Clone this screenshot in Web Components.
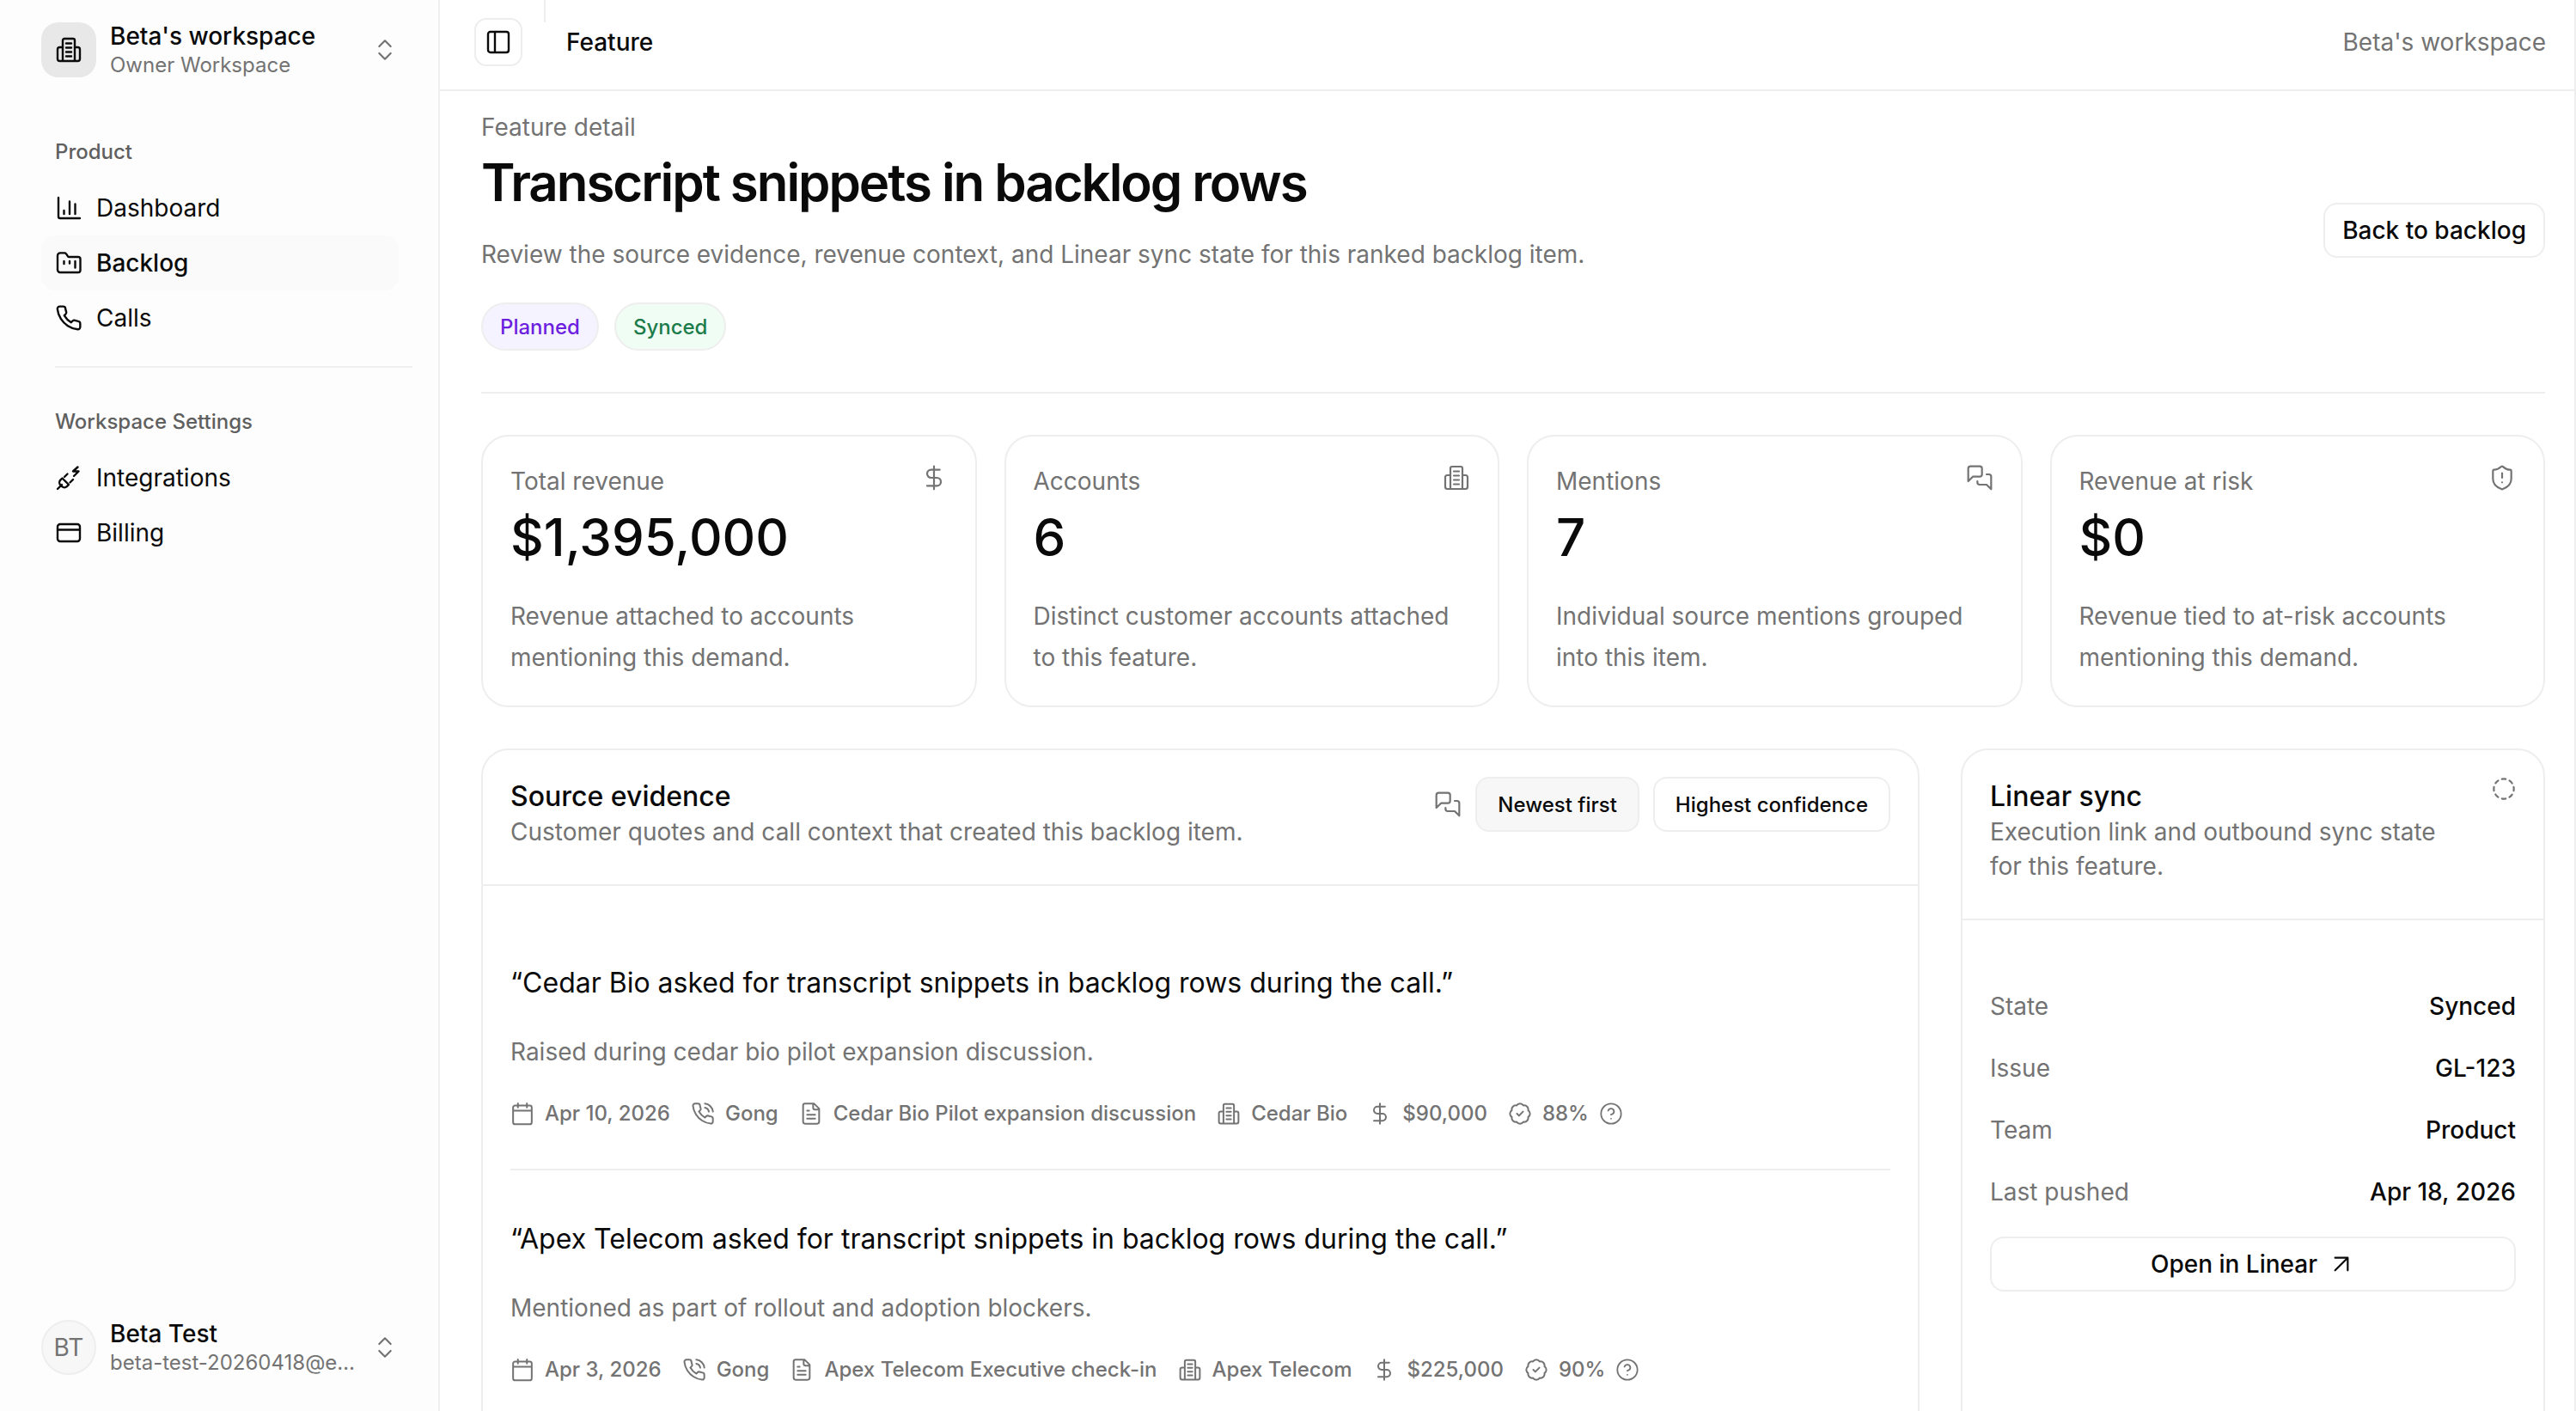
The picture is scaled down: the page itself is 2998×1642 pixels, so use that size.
<!DOCTYPE html>
<html lang="en">
<head>
<meta charset="utf-8">
<title>Feature</title>
<style>
	html, body { margin: 0; height: 100%; background: #fff; }
	body { font-family: Inter, "Noto Sans", sans-serif; color: #0a0a0a; overflow: hidden; }
</style>
</head>
<body>
<x-app>
	<x-sidebar slot="side">
		<x-switcher slot="top" name="Beta's workspace" sub="Owner Workspace" logo></x-switcher>
		<x-nav-group label="Product">
			<x-nav-item icon="chart">Dashboard</x-nav-item>
			<x-nav-item icon="folder" active>Backlog</x-nav-item>
			<x-nav-item icon="phone">Calls</x-nav-item>
		</x-nav-group>
		<x-nav-group label="Workspace Settings" divided>
			<x-nav-item icon="plug">Integrations</x-nav-item>
			<x-nav-item icon="card">Billing</x-nav-item>
		</x-nav-group>
		<x-switcher slot="bottom" name="Beta Test" sub="beta-test-20260418@e…"></x-switcher>
	</x-sidebar>
	<x-topbar slot="head" title="Feature" workspace="Beta's workspace"></x-topbar>
	<x-page-head kicker="Feature detail" title="Transcript snippets in backlog rows" sub="Review the source evidence, revenue context, and Linear sync state for this ranked backlog item.">
		<x-pill slot="pills" bg="#f5f3ff" fg="#6d1fe0">Planned</x-pill>
		<x-pill slot="pills" bg="#f0fdf4" fg="#1c7c4a">Synced</x-pill>
		<x-btn slot="action">Back to backlog</x-btn>
	</x-page-head>
	<x-stats>
		<x-stat label="Total revenue" value="$1,395,000" icon="dollar">Revenue attached to accounts mentioning this demand.</x-stat>
		<x-stat label="Accounts" value="6" icon="building">Distinct customer accounts attached to this feature.</x-stat>
		<x-stat label="Mentions" value="7" icon="messages">Individual source mentions grouped into this item.</x-stat>
		<x-stat label="Revenue at risk" value="$0" icon="shield">Revenue tied to at-risk accounts mentioning this demand.</x-stat>
	</x-stats>
	<x-columns>
		<x-panel title="Source evidence" sub="Customer quotes and call context that created this backlog item.">
			<x-icon slot="tools" name="messages" size="32" style="color:#737373"></x-icon>
			<x-btn slot="tools" small active>Newest first</x-btn>
			<x-btn slot="tools" small>Highest confidence</x-btn>
			<x-evidence quote="“Cedar Bio asked for transcript snippets in backlog rows during the call.”" note="Raised during cedar bio pilot expansion discussion." divided>
				<x-meta icon="calendar">Apr 10, 2026</x-meta>
				<x-meta icon="phonecall">Gong</x-meta>
				<x-meta icon="file">Cedar Bio Pilot expansion discussion</x-meta>
				<x-meta icon="building">Cedar Bio</x-meta>
				<x-meta icon="dollar">$90,000</x-meta>
				<x-meta icon="badge" help>88%</x-meta>
			</x-evidence>
			<x-evidence quote="“Apex Telecom asked for transcript snippets in backlog rows during the call.”" note="Mentioned as part of rollout and adoption blockers.">
				<x-meta icon="calendar">Apr 3, 2026</x-meta>
				<x-meta icon="phonecall">Gong</x-meta>
				<x-meta icon="file">Apex Telecom Executive check-in</x-meta>
				<x-meta icon="building">Apex Telecom</x-meta>
				<x-meta icon="dollar">$225,000</x-meta>
				<x-meta icon="badge" help>90%</x-meta>
			</x-evidence>
		</x-panel>
		<x-panel title="Linear sync" sub="Execution link and outbound sync state for this feature." narrow>
			<x-icon slot="tools" name="dashed" size="28" style="color:#737373"></x-icon>
			<x-sync-row label="State">Synced</x-sync-row>
			<x-sync-row label="Issue">GL-123</x-sync-row>
			<x-sync-row label="Team">Product</x-sync-row>
			<x-sync-row label="Last pushed">Apr 18, 2026</x-sync-row>
			<x-btn wide>Open in Linear <x-icon name="arrow" size="32"></x-icon></x-btn>
		</x-panel>
	</x-columns>
</x-app>

<script>
const PHONE = "M22 16.92v3a2 2 0 0 1-2.18 2 19.79 19.79 0 0 1-8.63-3.07 19.5 19.5 0 0 1-6-6 19.79 19.79 0 0 1-3.07-8.67A2 2 0 0 1 4.11 2h3a2 2 0 0 1 2 1.72 12.84 12.84 0 0 0 .7 2.81 2 2 0 0 1-.45 2.11L8.09 9.91a16 16 0 0 0 6 6l1.27-1.27a2 2 0 0 1 2.11-.45 12.84 12.84 0 0 0 2.81.7A2 2 0 0 1 22 16.92z"
const ICONS = {
	chart: [32, "M4 4v22a2 2 0 0 0 2 2h23M10.5 19v4M17 8.5V23M23.5 11.5V23"],
	folder: [32, "M6 27h21a2.5 2.5 0 0 0 2.5-2.5v-13A2.5 2.5 0 0 0 27 9H16.5a2 2 0 0 1-1.6-.8L13 5.4A2.5 2.5 0 0 0 11 4.4H6a3 3 0 0 0-3 3V24a3 3 0 0 0 3 3zM10.5 14v3M17 14v2.5M23.5 14v7.5"],
	phone: [24, PHONE],
	plug: [32, "M3 29l5-5M8.5 16.5l7.5 7.5-2.2 2.2a4 4 0 0 1-5.6 0l-1.9-1.9a4 4 0 0 1 0-5.6zM11 15l3.5-3.5M17.5 21.5l3.5-3.5M26.5 3.5l-5.5 5h6.5L22 14"],
	card: [32, "M6 6h20a3 3 0 0 1 3 3v14a3 3 0 0 1-3 3H6a3 3 0 0 1-3-3V9a3 3 0 0 1 3-3zM3 12.5h26"],
	building: [32, "M11 3h10a2 2 0 0 1 2 2v24H9V5a2 2 0 0 1 2-2zM9 13H5.5A2.500 2.500 0 0 0 3 15.500v11A2.500 2.500 0 0 0 5.500 29h21a2.500 2.500 0 0 0 2.500-2.500v-11a2.500 2.500 0 0 0-2.500-2.500H23M13 8.500h6M13 13.500h6M13 18.500h6M13 23.500h6"],
	updown: [24, "m7 15 5 5 5-5M7 9l5-5 5 5"],
	panel: [24, "M5 3h14a2 2 0 0 1 2 2v14a2 2 0 0 1-2 2H5a2 2 0 0 1-2-2V5a2 2 0 0 1 2-2zM9 3v18"],
	dollar: [24, "M12 2v20M17 5H9.500a3.500 3.500 0 0 0 0 7h5a3.500 3.500 0 0 1 0 7H6"],
	messages: [24, "M14 9a2 2 0 0 1-2 2H6l-4 4V4a2 2 0 0 1 2-2h8a2 2 0 0 1 2 2zM18 9h2a2 2 0 0 1 2 2v11l-4-4h-6a2 2 0 0 1-2-2v-1"],
	shield: [24, "M20 13c0 5-3.500 7.500-7.660 8.950a1 1 0 0 1-.67-.01C7.500 20.500 4 18 4 13V6a1 1 0 0 1 1-1c2 0 4.500-1.200 6.240-2.720a1.170 1.170 0 0 1 1.520 0C14.510 3.810 17 5 19 5a1 1 0 0 1 1 1zM12 8v4M12 16h.01"],
	calendar: [24, "M4.700 3.800h14.600a2 2 0 0 1 2 2v14.700a2 2 0 0 1-2 2H4.700a2 2 0 0 1-2-2V5.800a2 2 0 0 1 2-2zM7.500 1.800v4M16.500 1.800v4M2.700 9h18.600"],
	phonecall: [24, PHONE + "M14.050 2a9 9 0 0 1 8 7.940M14.050 6A5 5 0 0 1 18 10"],
	file: [24, "M15 2H6a2 2 0 0 0-2 2v16a2 2 0 0 0 2 2h12a2 2 0 0 0 2-2V7zM14 2v4a2 2 0 0 0 2 2h4M10 9H8M16 13H8M16 17H8"],
	badge: [24, "M3.850 8.620a4 4 0 0 1 4.780-4.770 4 4 0 0 1 6.740 0 4 4 0 0 1 4.780 4.780 4 4 0 0 1 0 6.740 4 4 0 0 1-4.770 4.780 4 4 0 0 1-6.750 0 4 4 0 0 1-4.780-4.770 4 4 0 0 1 0-6.760ZM9 12l2 2 4-4"],
	help: [24, "M12 2a10 10 0 1 1 0 20 10 10 0 0 1 0-20zM9.090 9a3 3 0 0 1 5.830 1c0 2-3 3-3 3M12 17h.01"],
	dashed: [24, "M10.100 2.182a10 10 0 0 1 3.800 0M13.900 21.818a10 10 0 0 1-3.800 0M17.609 3.721a10 10 0 0 1 2.690 2.700M2.182 13.900a10 10 0 0 1 0-3.800M20.279 17.609a10 10 0 0 1-2.700 2.690M21.818 10.100a10 10 0 0 1 0 3.800M3.721 6.391a10 10 0 0 1 2.700-2.690M6.391 20.279a10 10 0 0 1-2.690-2.700"],
	arrow: [24, "M6.500 6.500h11v11M6.500 17.500l11-11"],
}

// small base so every element is just a template + optional attributes
class Base extends HTMLElement {
	constructor() {
		super()
		this.attachShadow({mode: "open"})
	}
	connectedCallback() {
		this.shadowRoot.innerHTML = this.render()
	}
	attr(name) { return this.getAttribute(name) || "" }
}

class XIcon extends Base {
	render() {
		let [box, d] = ICONS[this.attr("name")]
		let size = this.attr("size") || 28
		let weight = this.attr("weight") || 2.2
		return `<style>
:host { display: block; flex: none; width: ${size}px; height: ${size}px; }
svg { display: block; }
path { vector-effect: non-scaling-stroke; }
</style>
<svg width="${size}" height="${size}" viewBox="0 0 ${box} ${box}" fill="none" stroke="currentColor" stroke-width="${weight}" stroke-linecap="round" stroke-linejoin="round"><path d="${d}"/></svg>`
	}
}
customElements.define("x-icon", XIcon)

class XApp extends Base {
	render() { return `<style>
:host { display: grid; grid-template-columns: 512px minmax(0, 1fr); height: 100vh; overflow: hidden; }
main { border-right: 2px solid #eeeeee; overflow: hidden; display: flex; flex-direction: column; }
.body { padding: 22px 34px 0 48px; display: flex; flex-direction: column; gap: 48px; }
</style>
<slot name="side"></slot>
<main>
	<slot name="head"></slot>
	<div class="body"><slot></slot></div>
</main>` }
}
customElements.define("x-app", XApp)

class XSidebar extends Base {
	render() { return `<style>
:host { display: flex; flex-direction: column; background: #fdfdfd; height: 100vh; box-sizing: border-box; padding: 26px 46px 42px 48px; border-right: 2px solid #f0f0f0; }
.groups { flex: 1; display: flex; flex-direction: column; padding-top: 67px; margin-right: -16px; }
</style>
<slot name="top"></slot>
<div class="groups"><slot></slot></div>
<slot name="bottom"></slot>` }
}
customElements.define("x-sidebar", XSidebar)

class XSwitcher extends Base {
	render() {
		let badge = this.hasAttribute("logo")
			? `<div class="logo"><x-icon name="building" size="32" weight="2.4"></x-icon></div>`
			: `<div class="avatar">BT</div>`
		return `<style>
:host { display: flex; align-items: center; gap: 16px; height: 64px; width: 416px; }
.logo, .avatar { width: 64px; height: 64px; flex: none; display: flex; align-items: center; justify-content: center; box-sizing: border-box; }
.logo { background: #e8e8e8; border-radius: 20px; }
.avatar { border-radius: 50%; background: #f7f7f7; border: 2px solid #eeeeee; color: #737373; font-size: 28px; }
.text { flex: 1; min-width: 0; display: flex; flex-direction: column; }
.name { font-size: 28px; line-height: 36px; font-weight: 500; }
.sub { font-size: 24px; line-height: 32px; color: #737373; white-space: nowrap; }
x-icon { color: #737373; }
.logo x-icon { color: #0a0a0a; }
</style>
${badge}
<div class="text"><div class="name">${this.attr("name")}</div><div class="sub">${this.attr("sub")}</div></div>
<x-icon name="updown" size="32"></x-icon>`
	}
}
customElements.define("x-switcher", XSwitcher)

class XNavGroup extends Base {
	render() {
		let divided = this.hasAttribute("divided")
		return `<style>
:host { display: block; ${divided ? "margin-top: 24px; border-top: 2px solid #f0f0f0; padding-top: 43px; margin-left: 16px;" : ""} }
.label { font-size: 24px; line-height: 40px; font-weight: 500; color: #5f5f5f; margin: 0 0 13px ${divided ? 0 : 16}px; }
.items { ${divided ? "margin-left: -16px;" : ""} width: 416px; display: flex; flex-direction: column; }
</style>
<div class="label">${this.attr("label")}</div>
<div class="items"><slot></slot></div>`
	}
}
customElements.define("x-nav-group", XNavGroup)

class XNavItem extends Base {
	render() {
		let active = this.hasAttribute("active")
		return `<style>
:host { display: flex; align-items: center; gap: 16px; height: 64px; padding: 0 16px; border-radius: 16px; font-size: 28px; font-weight: ${active ? 500 : 400}; background: ${active ? "#fafafa" : "transparent"}; }
</style>
<x-icon name="${this.attr("icon")}" size="32" weight="2.4"></x-icon><slot></slot>`
	}
}
customElements.define("x-nav-item", XNavItem)

class XTopbar extends Base {
	render() { return `<style>
:host { display: flex; align-items: center; height: 98px; border-bottom: 2px solid #eeeeee; padding: 0 33px 6px 40px; flex: none; }
.toggle { width: 56px; height: 56px; box-sizing: border-box; border: 2px solid #eeeeee; border-radius: 14px; display: flex; align-items: center; justify-content: center; }
.sep { align-self: flex-start; width: 2px; height: 26px; background: #eeeeee; margin: 0 24px 0 25px; }
.title { font-size: 28px; font-weight: 500; flex: 1; }
.ws { font-size: 28px; color: #737373; }
</style>
<div class="toggle"><x-icon name="panel" size="32" weight="2.4"></x-icon></div>
<div class="sep"></div>
<div class="title">${this.attr("title")}</div>
<div class="ws">${this.attr("workspace")}</div>` }
}
customElements.define("x-topbar", XTopbar)

class XPageHead extends Base {
	render() { return `<style>
:host { display: flex; align-items: center; justify-content: space-between; border-bottom: 2px solid #eeeeee; padding-bottom: 48px; }
.kicker { font-size: 28px; line-height: 40px; color: #737373; }
h1 { margin: 8px 0 0; font-size: 60px; line-height: 72px; font-weight: 600; letter-spacing: -2.05px; }
p { margin: 28px 0 0; font-size: 28px; line-height: 40px; color: #737373; }
.pills { display: flex; gap: 18px; margin-top: 36px; }
</style>
<div>
	<div class="kicker">${this.attr("kicker")}</div>
	<h1>${this.attr("title")}</h1>
	<p>${this.attr("sub")}</p>
	<div class="pills"><slot name="pills"></slot></div>
</div>
<slot name="action"></slot>` }
}
customElements.define("x-page-head", XPageHead)

class XPill extends Base {
	render() { return `<style>
:host { display: inline-flex; align-items: center; height: 56px; box-sizing: border-box; padding: 0 20px; border: 2px solid #eeeeee; border-radius: 28px; font-size: 24px; font-weight: 500; background: ${this.attr("bg")}; color: ${this.attr("fg")}; }
</style><slot></slot>` }
}
customElements.define("x-pill", XPill)

class XBtn extends Base {
	render() {
		let small = this.hasAttribute("small")
		let wide = this.hasAttribute("wide")
		let bg = this.hasAttribute("active") ? "#f7f7f7" : "#ffffff"
		return `<style>
:host { display: ${wide ? "flex" : "inline-flex"}; align-items: center; justify-content: center; gap: 12px; height: 64px; box-sizing: border-box; padding: 0 ${small ? 24 : 20}px; border: 2px solid #eeeeee; border-radius: 16px; background: ${bg}; font-size: ${small ? 24 : 28}px; font-weight: 500; white-space: nowrap; flex: none; ${wide ? "margin-top: 16px;" : ""} }
</style><slot></slot>`
	}
}
customElements.define("x-btn", XBtn)

class XStats extends Base {
	render() { return `<style>
:host { display: grid; grid-template-columns: repeat(4, minmax(0, 1fr)); gap: 32px; }
</style><slot></slot>` }
}
customElements.define("x-stats", XStats)

class XStat extends Base {
	render() { return `<style>
:host { display: block; border: 2px solid #eeeeee; border-radius: 32px; padding: 32px; background: #fff; }
.top { display: flex; justify-content: space-between; align-items: flex-start; height: 40px; }
.label { font-size: 28px; line-height: 40px; color: #737373; }
x-icon { color: #737373; }
.value { font-size: 60px; line-height: 72px; font-weight: 500; margin-top: 9px; }
.desc { font-size: 28px; line-height: 48px; color: #737373; margin-top: 32px; }
</style>
<div class="top"><div class="label">${this.attr("label")}</div><x-icon name="${this.attr("icon")}" size="32"></x-icon></div>
<div class="value">${this.attr("value")}</div>
<div class="desc"><slot></slot></div>` }
}
customElements.define("x-stat", XStat)

class XColumns extends Base {
	render() { return `<style>
:host { display: grid; grid-template-columns: minmax(0, 1fr) 680px; gap: 48px; }
</style><slot></slot>` }
}
customElements.define("x-columns", XColumns)

class XPanel extends Base {
	render() {
		let narrow = this.hasAttribute("narrow")
		return `<style>
:host { display: block; border: 2px solid #eeeeee; border-radius: 32px; background: #fff; min-height: 900px; }
header { display: flex; justify-content: space-between; align-items: flex-start; gap: 40px; padding: 33px 32px 41px; border-bottom: 2px solid #eeeeee; }
.title { font-size: 32px; line-height: 42px; font-weight: 500; }
.sub { font-size: 28px; line-height: 40px; color: #737373; }
.tools { display: flex; align-items: center; gap: 16px; flex: none; margin-top: -2px; }
.body { padding: ${narrow ? "64px 32px 0" : "0 32px"}; }
</style>
<header>
	<div>
		<div class="title">${this.attr("title")}</div>
		<div class="sub">${this.attr("sub")}</div>
	</div>
	<div class="tools"><slot name="tools"></slot></div>
</header>
<div class="body"><slot></slot></div>` }
}
customElements.define("x-panel", XPanel)

class XEvidence extends Base {
	render() {
		let divided = this.hasAttribute("divided")
		return `<style>
:host { display: block; ${divided ? "padding: 91px 0 48px; border-bottom: 2px solid #eeeeee;" : "padding-top: 58px;"} }
.quote { font-size: 32px; line-height: 44px; font-weight: 400; }
.note { font-size: 28px; line-height: 40px; color: #737373; margin-top: 38px; }
.meta { display: flex; align-items: center; gap: 24px; margin-top: 36px; }
</style>
<div class="quote">${this.attr("quote")}</div>
<div class="note">${this.attr("note")}</div>
<div class="meta"><slot></slot></div>`
	}
}
customElements.define("x-evidence", XEvidence)

class XMeta extends Base {
	render() {
		let help = this.hasAttribute("help") ? `<x-icon name="help" size="28" weight="1.800"></x-icon>` : ""
		return `<style>
:host { display: flex; align-items: center; gap: 12px; font-size: 24px; line-height: 32px; font-weight: 500; color: #737373; white-space: nowrap; }
</style>
<x-icon name="${this.attr("icon")}" size="28" weight="2"></x-icon><slot></slot>${help}`
	}
}
customElements.define("x-meta", XMeta)

class XSyncRow extends Base {
	render() { return `<style>
:host { display: flex; justify-content: space-between; align-items: center; height: 72px; font-size: 28px; }
.k { color: #737373; }
.v { font-weight: 500; }
</style>
<span class="k">${this.attr("label")}</span><span class="v"><slot></slot></span>` }
}
customElements.define("x-sync-row", XSyncRow)
</script>
</body>
</html>
